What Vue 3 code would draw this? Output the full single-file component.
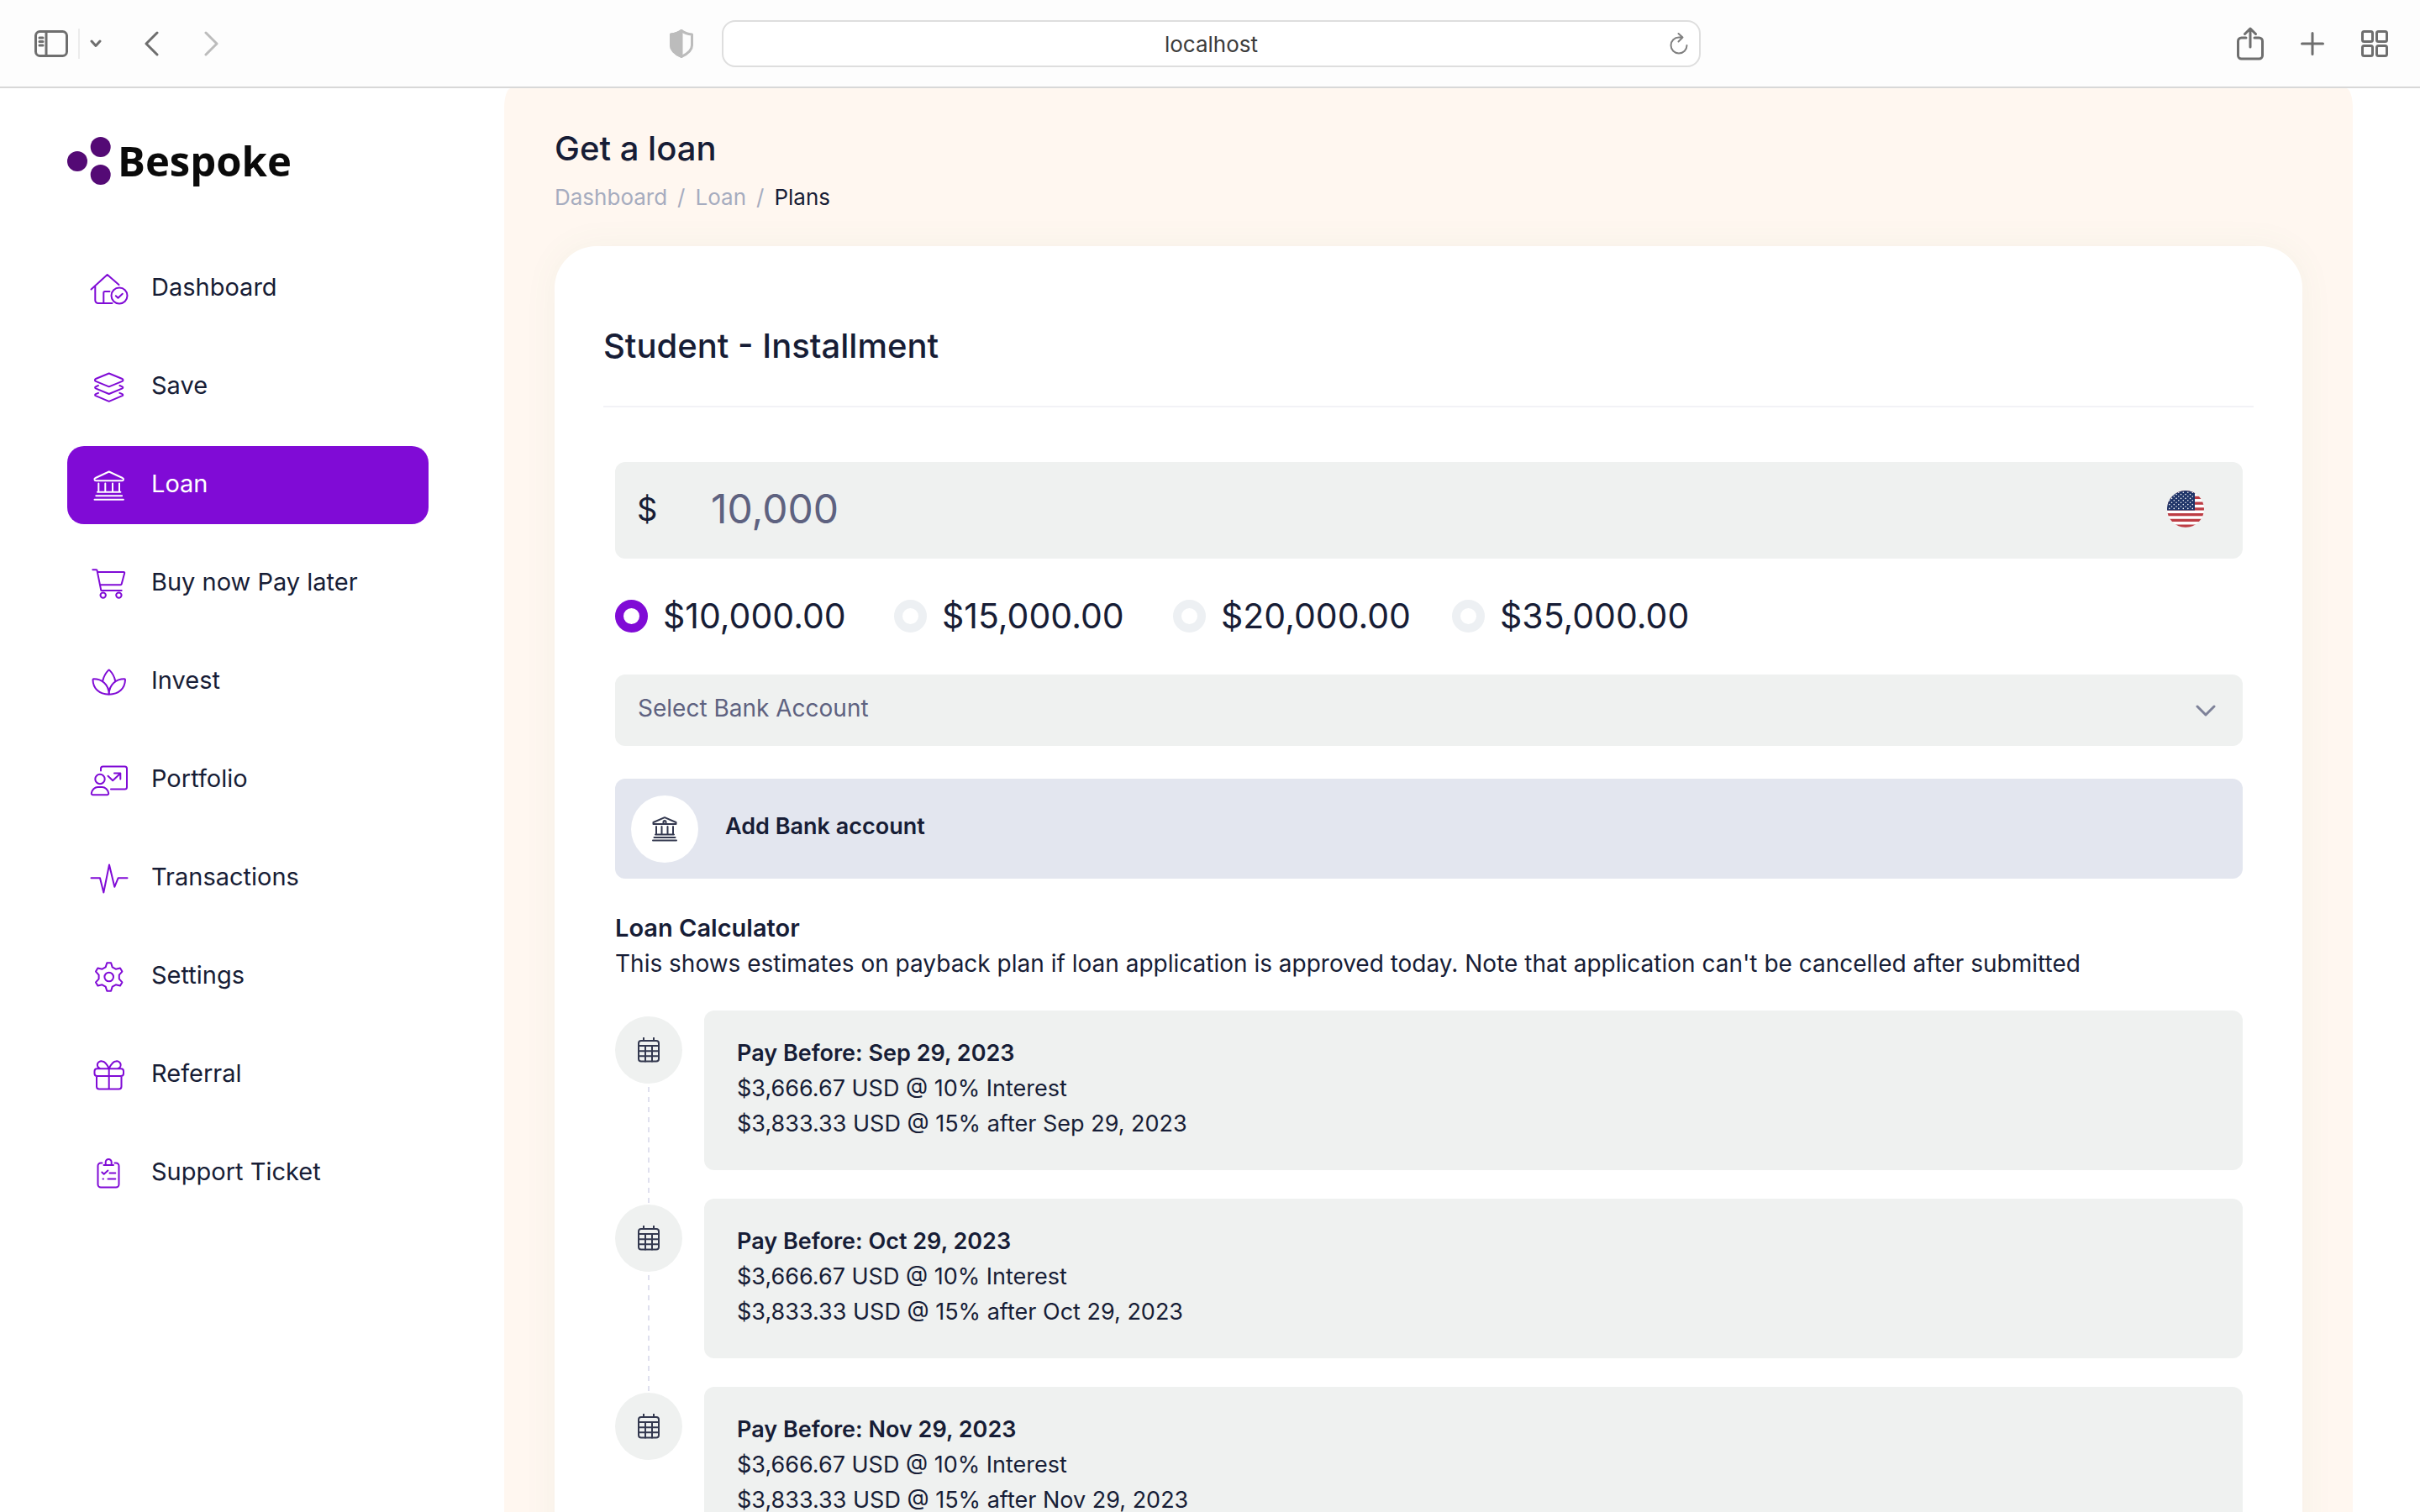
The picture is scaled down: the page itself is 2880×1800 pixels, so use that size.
<template>
  <div class="window">
    <header class="toolbar">
      <div class="toolbar-left">
        <div class="toolbar-group">
          <button class="tool-btn" aria-label="Show sidebar">
            <svg width="40" height="32" viewBox="0 0 40 32">
              <rect x="1.5" y="1.5" width="37" height="29" rx="5" />
              <path d="M14 2v28M6 9h4M6 13.5h4M6 18h4" />
            </svg>
          </button>
          <span class="tool-divider"></span>
          <button class="tool-btn" aria-label="Tab groups">
            <svg width="14" height="10" viewBox="0 0 14 10"><path d="M2 2l5 5.500 5-5.500" /></svg>
          </button>
          <button class="tool-btn back" aria-label="Back">
            <svg width="18" height="30" viewBox="0 0 18 30"><path d="M16 2L3 15l13 13" /></svg>
          </button>
          <button class="tool-btn forward" aria-label="Forward" disabled>
            <svg width="18" height="30" viewBox="0 0 18 30"><path d="M2 2l13 13L2 28" /></svg>
          </button>
        </div>
        <button class="tool-btn shield" aria-label="Privacy report">
          <svg width="28" height="34" viewBox="0 0 28 34">
            <path d="M14 1.5C17 4 21 5.500 26.500 6v13c0 6-6 10.500-12.500 13.500C7.500 29.500 1.500 25 1.500 19V6C7 5.500 11 4 14 1.500z" />
            <path class="solid" d="M14 1.500v31C7.500 29.500 1.500 25 1.500 19V6C7 5.500 11 4 14 1.500z" />
          </svg>
        </button>
      </div>
      <div class="address">
        <input v-model="address" class="address-input" type="text" aria-label="Address" />
        <button class="tool-btn reload" aria-label="Reload">
          <svg width="24" height="28" viewBox="0 0 24 28">
            <path d="M21.500 16a9.500 9.500 0 1 1-9.500-9.500h4M11.500 2l5 4.500-5 5" />
          </svg>
        </button>
      </div>
      <div class="toolbar-right">
        <button class="tool-btn" aria-label="Share">
          <svg width="32" height="40" viewBox="0 0 32 40">
            <path d="M11 13H5.500a4 4 0 0 0-4 4v17a4 4 0 0 0 4 4h21a4 4 0 0 0 4-4V17a4 4 0 0 0-4-4H21M16 24V2M9.500 8.500L16 2l6.500 6.500" />
          </svg>
        </button>
        <button class="tool-btn" aria-label="New tab">
          <svg width="28" height="28" viewBox="0 0 28 28"><path d="M14 1.500v25M1.500 14h25" /></svg>
        </button>
        <button class="tool-btn" aria-label="Tab overview">
          <svg width="32" height="32" viewBox="0 0 32 32">
            <rect x="1.500" y="1.500" width="12" height="12" rx="2" />
            <rect x="18.500" y="1.500" width="12" height="12" rx="2" />
            <rect x="1.500" y="18.500" width="12" height="12" rx="2" />
            <rect x="18.500" y="18.500" width="12" height="12" rx="2" />
          </svg>
        </button>
      </div>
    </header>

    <div class="page">
      <aside class="sidebar">
        <a class="brand" href="#">
          <svg class="brand-mark" width="52" height="57" viewBox="0 0 52 57">
            <circle cx="12" cy="29" r="12" />
            <circle cx="39.700" cy="12" r="12" />
            <circle cx="39.700" cy="45" r="12" />
          </svg>
          <span class="brand-name">Bespoke</span>
        </a>
        <nav class="nav">
          <a
            v-for="item in navItems"
            :key="item.label"
            href="#"
            class="nav-item"
            :class="{ active: item.label === activeItem }"
          >
            <svg class="nav-icon" width="48" height="40" viewBox="0 0 48 40">
              <path :d="item.icon" />
            </svg>
            <span>{{ item.label }}</span>
          </a>
        </nav>
      </aside>

      <main class="main">
        <h1 class="page-title">Get a loan</h1>
        <nav class="breadcrumb" aria-label="Breadcrumb">
          <a href="#">Dashboard</a>
          <span>/</span>
          <a href="#">Loan</a>
          <span>/</span>
          <span class="current">Plans</span>
        </nav>

        <section class="card">
          <h2 class="card-title">Student - Installment</h2>
          <form class="loan-form" @submit.prevent>
            <div class="amount-field">
              <label for="amount">$</label>
              <input id="amount" v-model="amount" type="text" />
              <svg class="flag" width="44" height="44" viewBox="0 0 44 44" role="img" aria-label="USD">
                <clipPath id="flag-clip"><circle cx="22" cy="22" r="22" /></clipPath>
                <g clip-path="url(#flag-clip)">
                  <rect width="44" height="44" fill="#fff" />
                  <rect v-for="n in 7" :key="n" :y="(n - 1) * 6.75" width="44" height="3.300" fill="#bd3d44" />
                  <rect width="33" height="23.500" fill="#1f3468" />
                  <circle v-for="(s, i) in stars" :key="i" :cx="s.x" :cy="s.y" r="0.800" fill="#fff" />
                </g>
              </svg>
            </div>

            <div class="amount-options">
              <label v-for="opt in options" :key="opt" class="amount-option">
                <input v-model="selected" type="radio" name="plan" :value="opt" />
                <span>{{ opt }}</span>
              </label>
            </div>

            <div class="bank-select">
              <select v-model="bank" aria-label="Bank account">
                <option value="">Select Bank Account</option>
              </select>
              <svg width="24" height="14" viewBox="0 0 24 14"><path d="M2 2l10 10L22 2" /></svg>
            </div>

            <button type="button" class="add-bank">
              <span class="round">
                <svg width="30" height="30" viewBox="0 0 30 30">
                  <path d="M1.500 9v-2L15 1.200 28.500 7v2zM5 12v9M11.500 12v9M18.500 12v9M25 12v9M4 21.500h22M2.500 25h25M1 28.500h28M13.500 9V6.500a1.500 1.500 0 0 1 3 0V9" />
                </svg>
              </span>
              <span class="add-bank-text">Add Bank account</span>
            </button>
          </form>

          <section class="calculator">
            <h3>Loan Calculator</h3>
            <p>This shows estimates on payback plan if loan application is approved today. Note that application can't be cancelled after submitted</p>
            <ol class="timeline">
              <li v-for="date in dates" :key="date" class="timeline-item">
                <div class="rail">
                  <span class="round">
                    <svg width="26" height="30" viewBox="0 0 26 30">
                      <rect x="1" y="4" width="24" height="24.500" rx="3" />
                      <path d="M7 0.500V4M19 0.500V4M1 10h24M1 16.200h24M1 22.300h24M9 10v18.500M17 10v18.500" />
                    </svg>
                  </span>
                  <span class="rail-line"></span>
                </div>
                <div class="payment">
                  <strong>Pay Before: {{ date }}</strong>
                  <p>$3,666.67 USD @ 10% Interest</p>
                  <p>$3,833.33 USD @ 15% after {{ date }}</p>
                </div>
              </li>
            </ol>
          </section>
        </section>
      </main>
    </div>
  </div>
</template>

<script setup>
import { ref } from 'vue'

const address = ref('localhost')
const activeItem = ref('Loan')
const amount = ref('10,000')
const selected = ref('$10,000.00')
const bank = ref('')

const options = ['$10,000.00', '$15,000.00', '$20,000.00', '$35,000.00']
const dates = ['Sep 29, 2023', 'Oct 29, 2023', 'Nov 29, 2023']

const stars = []
for (let row = 0; row < 9; row++) {
  const count = row % 2 === 0 ? 6 : 5
  for (let col = 0; col < count; col++) {
    stars.push({ x: 2.8 + col * 5.5 + (row % 2) * 2.75, y: 2.2 + row * 2.4 })
  }
}

const navItems = [
  {
    label: 'Dashboard',
    icon: 'M2.5 20.500L21.700 3 35.500 15M7.300 17v16.500a3.500 3.500 0 0 0 3.500 3.500H27.500M17.300 37V24.500a1.500 1.500 0 0 1 1.500-1.500H24.500M45.500 28a9.500 9.500 0 1 1-19 0 9.500 9.500 0 1 1 19 0M31.800 28.300l2.700 2.500 5.300-5'
  },
  {
    label: 'Save',
    icon: 'M23.700 3.500L39.500 10a1.500 1.500 0 0 1 0 2.800L23.700 19.300 7.900 12.800a1.500 1.500 0 0 1 0-2.800zM11 18l-3.200 1.400a1 1 0 0 0 0 1.900L23.700 28l15.900-6.700a1 1 0 0 0 0-1.900L36.400 18M11 26.800l-3.200 1.400a1 1 0 0 0 0 1.900L23.700 36.800l15.900-6.700a1 1 0 0 0 0-1.900L36.400 26.800'
  },
  {
    label: 'Loan',
    icon: 'M23.700 3.500L39.800 11a1.700 1.700 0 0 1-.7 3.300H8.300A1.700 1.700 0 0 1 7.600 11zM11.300 17.500V27.500M19.300 17.500V27.500M28 17.500V27.500M36 17.500V27.500M10 27.700h27.400M8.300 32.300h30.800M6.500 36.800h34.400'
  },
  {
    label: 'Buy now Pay later',
    icon: 'M4.300 3.200H8.500a1 1 0 0 1 1 .8L14.300 27.900H38.700M10 5.900H41.200a1 1 0 0 1 1 1.300L38.700 20.300a1.200 1.200 0 0 1-1.100.9H13.200M19.900 33.600a3.200 3.200 0 1 1-6.400 0 3.200 3.200 0 1 1 6.400 0M38.600 33.600a3.200 3.200 0 1 1-6.400 0 3.200 3.200 0 1 1 6.400 0'
  },
  {
    label: 'Invest',
    icon: 'M23.700 34.700C12 34.700 4.700 27.500 4.500 17.300a1 1 0 0 1 1-1C15 16.300 23.700 22.500 23.700 34.700C23.700 22.500 32.500 16.300 42 16.300a1 1 0 0 1 1 1C42.700 27.500 35.500 34.700 23.700 34.700zM16.200 18.700C17.300 13.500 20 9 23 5.900a1 1 0 0 1 1.400 0C27.500 9 30.200 13.500 31.200 18.700'
  },
  {
    label: 'Portfolio',
    icon: 'M14 8.500V6a2.500 2.500 0 0 1 2.500-2.500H42.500A2.500 2.500 0 0 1 45 6V28a2.500 2.500 0 0 1-2.500 2.500H26M18.700 18.500a5.700 5.700 0 1 1-11.400 0 5.700 5.700 0 1 1 11.400 0M4.500 37.200a1.700 1.700 0 0 1-1.700-1.900C3.500 31 7 28 10.500 28h5c3.500 0 7 3 7.700 7.300a1.700 1.700 0 0 1-1.700 1.900zM22.500 14.700l5.700 5.500 9-8.500M30 11.600h7.300v7'
  },
  {
    label: 'Transactions',
    icon: 'M2.500 19.200H13L17.300 36.500 24 3.500 30.300 29.800 34.700 19.200H45.500'
  },
  {
    label: 'Settings',
    icon: 'M21.300 3.300h4.800l1.600 5.100 4.100 2.300 5.200-1.200 2.400 4.100-3.600 4.100v4.600l3.600 4.100-2.400 4.100-5.200-1.200-4.100 2.300-1.600 5.100h-4.800l-1.600-5.100-4.100-2.300-5.200 1.200-2.400-4.100 3.600-4.100v-4.600L8 13.600l2.400-4.100 5.200 1.200 4.100-2.300zM29 20a5.300 5.300 0 1 1-10.600 0 5.300 5.300 0 1 1 10.600 0'
  },
  {
    label: 'Referral',
    icon: 'M9.500 12.300H38a3 3 0 0 1 3 3V18a3 3 0 0 1-3 3H9.500a3 3 0 0 1-3-3v-2.700a3 3 0 0 1 3-3zM9 21V33.500a3 3 0 0 0 3 3H35.500a3 3 0 0 0 3-3V21M23.700 12.300V36.500M23.700 12C21 6.500 19 3.500 15.700 3.500a4.400 4.400 0 0 0-2.700 8.500M23.700 12C26.500 6.500 28.500 3.500 31.800 3.500a4.400 4.400 0 0 1 2.700 8.500'
  },
  {
    label: 'Support Ticket',
    icon: 'M15.500 7.500H14a3.500 3.500 0 0 0-3.500 3.500V33a3.500 3.500 0 0 0 3.500 3.500H32a3.500 3.500 0 0 0 3.500-3.500V11A3.500 3.500 0 0 0 32 7.500h-1.500M17.500 10h11.500M19.700 10V6.500a3.500 3.500 0 0 1 7 0V10M15.300 18.500l2.400 2.300 4.700-4.300M24.500 19.600h6.800M16.500 26.500h.5M22.500 26.500h8.800'
  }
]
</script>

<style>
body {
  margin: 0;
  background: #fff;
}
</style>

<style scoped>
.window {
  height: 100vh;
  display: flex;
  flex-direction: column;
  overflow: hidden;
  font-family: Inter, sans-serif;
  color: #171d36;
}
.window * {
  box-sizing: border-box;
}
h1,
h2,
h3,
p,
ol {
  margin: 0;
  padding: 0;
}
a {
  color: inherit;
  text-decoration: none;
}
button,
input,
select {
  font: inherit;
  color: inherit;
  border: none;
  background: none;
  margin: 0;
  padding: 0;
}
svg {
  display: block;
  flex: none;
  fill: none;
  stroke-linecap: round;
  stroke-linejoin: round;
}

/* browser bar */
.toolbar {
  flex: none;
  display: grid;
  grid-template-columns: 1fr 41.6% 1fr;
  align-items: center;
  height: 105px;
  padding: 0 38px 0 41px;
  background: #fdfdfd;
  border-bottom: 2px solid #d8d8d8;
}
.toolbar-left,
.toolbar-right,
.toolbar-group {
  display: flex;
  align-items: center;
}
.toolbar-left {
  justify-content: space-between;
  padding-right: 34px;
}
.toolbar-right {
  justify-content: flex-end;
  gap: 44px;
}
.tool-btn {
  color: #6e6e6e;
}
.tool-btn svg {
  stroke: currentColor;
  stroke-width: 3;
}
.tool-divider {
  width: 2px;
  height: 36px;
  margin: 0 12px;
  background: #ececec;
}
.back {
  margin-left: 50px;
}
.forward {
  margin-left: 54px;
}
.forward,
.shield {
  color: #bcbcbc;
}
.solid {
  fill: currentColor;
}
.address {
  display: flex;
  align-items: center;
  height: 56px;
  padding: 0 12px 0 36px;
  background: #fff;
  border: 2px solid #dedede;
  border-radius: 16px;
}
.address-input {
  flex: 1;
  min-width: 0;
  padding-top: 2px;
  font-size: 26px;
  text-align: center;
  color: #3c3c3c;
}
.reload {
  color: #808080;
}
.reload svg {
  stroke-width: 2;
}

/* page */
.page {
  flex: 1;
  min-height: 0;
  display: flex;
  align-items: flex-start;
}
.sidebar {
  flex: none;
  width: 600px;
  padding: 56px 90px 0 80px;
}
.brand {
  display: flex;
  align-items: center;
  gap: 8px;
}
.brand-mark {
  fill: #540a75;
}
.brand-name {
  font-family: "Open Sans", sans-serif;
  font-size: 49px;
  line-height: 60px;
  font-weight: 700;
  color: #0a0a0a;
}
.nav {
  display: flex;
  flex-direction: column;
  gap: 24px;
  margin-top: 76px;
}
.nav-item {
  display: flex;
  align-items: center;
  gap: 26px;
  height: 93px;
  padding: 0 26px;
  border-radius: 20px;
  font-size: 29px;
}
.nav-item span {
  padding-bottom: 4px;
}
.nav-icon {
  stroke: #800bd6;
  stroke-width: 2;
}
.nav-item.active {
  background: #800bd6;
  color: #fff;
}
.active .nav-icon {
  stroke: #fff;
}
.main {
  flex: 1;
  min-width: 0;
  margin-right: 80px;
  padding: 48px 60px 60px;
  background: #fff7f0;
  border-radius: 8px 8px 0 0 / 24px 24px 0 0;
}
.page-title,
.card-title {
  font-size: 40px;
  line-height: 48px;
  font-weight: 500;
}
.breadcrumb {
  display: flex;
  gap: 12px;
  margin-top: 14px;
  font-size: 26px;
  line-height: 40px;
  color: #a6acbf;
}
.breadcrumb .current {
  color: #171d36;
}
.card {
  margin-top: 38px;
  padding: 95px 58px 60px;
  background: #fff;
  border-radius: 50px;
  box-shadow: 0 0 40px rgba(90, 140, 90, 0.06);
}
.card-title {
  padding-bottom: 47px;
  border-bottom: 2px solid #f2f2f6;
}
.loan-form {
  padding: 65px 13px 0 14px;
}
.amount-field {
  display: flex;
  align-items: center;
  height: 115px;
  padding: 0 46px 4px 26px;
  background: #eff1f0;
  border-radius: 12px;
}
.amount-field label {
  width: 88px;
  font-size: 38px;
}
.amount-field input {
  flex: 1;
  min-width: 0;
  font-size: 48px;
  color: #5e6280;
}
.amount-options {
  display: flex;
  margin-top: 44px;
}
.amount-option {
  display: flex;
  align-items: center;
  gap: 18px;
  width: 332px;
  font-size: 41px;
  line-height: 48px;
}
.amount-option input {
  appearance: none;
  flex: none;
  width: 39px;
  height: 39px;
  border: 10px solid #edf0f3;
  border-radius: 50%;
  background: #fff;
}
.amount-option input:checked {
  border-color: #800bd6;
}
.bank-select {
  display: flex;
  align-items: center;
  height: 85px;
  margin-top: 46px;
  padding-right: 32px;
  background: #eff1f0;
  border-radius: 12px;
}
.bank-select select {
  appearance: none;
  flex: 1;
  height: 100%;
  padding: 0 0 6px 27px;
  font-size: 28px;
  color: #5e6280;
}
.bank-select svg {
  stroke: #7e8299;
  stroke-width: 3;
}
.add-bank {
  display: flex;
  align-items: center;
  gap: 32px;
  width: 100%;
  height: 119px;
  margin-top: 39px;
  padding: 0 19px;
  background: #e3e6ef;
  border-radius: 12px;
  font-size: 27px;
  font-weight: 600;
}
.add-bank-text {
  padding-bottom: 6px;
}
.round {
  flex: none;
  display: flex;
  align-items: center;
  justify-content: center;
  width: 80px;
  height: 80px;
  border-radius: 50%;
  background: #eff1f0;
}
.round svg {
  stroke: #33384f;
  stroke-width: 2;
}
.add-bank .round {
  background: #fff;
}
.calculator {
  padding: 38px 13px 0 14px;
  font-size: 28px;
  line-height: 42px;
}
.calculator h3 {
  font-size: 29px;
  font-weight: 600;
}
.timeline {
  margin-top: 35px;
  list-style: none;
  font-size: 27px;
}
.timeline-item {
  display: flex;
  gap: 26px;
}
.rail {
  display: flex;
  flex-direction: column;
  align-items: center;
  padding-top: 7px;
}
.rail-line {
  flex: 1;
  width: 2px;
  margin: 4px 0 -7px;
  background: repeating-linear-gradient(#dfe0ee 0 6px, transparent 6px 12px);
}
.timeline-item:last-child .rail-line {
  display: none;
}
.payment {
  flex: 1;
  margin-bottom: 34px;
  padding: 30px 39px 34px;
  background: #eff1f0;
  border-radius: 12px;
}
.payment strong {
  font-weight: 600;
}
</style>
